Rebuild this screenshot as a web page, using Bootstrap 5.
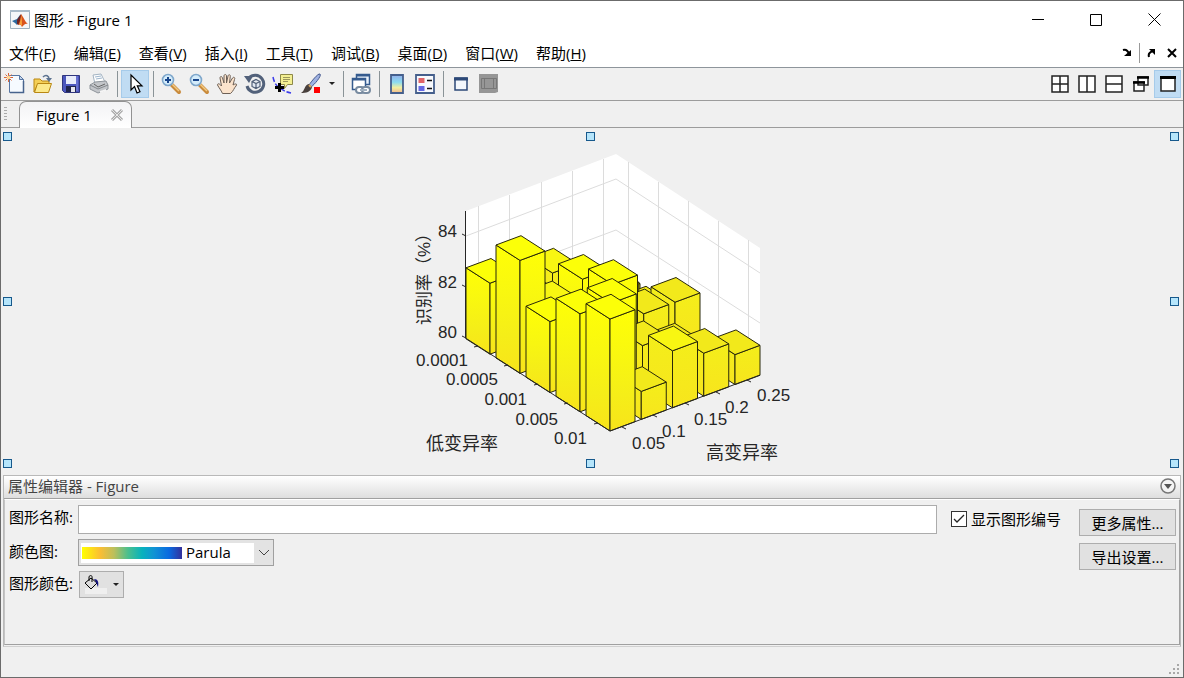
<!DOCTYPE html>
<html lang="zh-CN">
<head>
<meta charset="utf-8">
<meta name="viewport" content="width=device-width, initial-scale=1">
<title>图形 - Figure 1</title>
<link href="https://cdn.jsdelivr.net/npm/bootstrap@5.3.0/dist/css/bootstrap.min.css" rel="stylesheet">
<style>
  :root { --face: #f0f0f0; --line: #a0a0a0; }
  body { font-family: "Open Sans", "Noto Sans CJK SC", sans-serif; font-size: 15px; line-height: 20px; color: #000; background: var(--face); }
  .app-window { border: 1px solid #6b6b6b; background: var(--face); }
  .title-bar { height: 37px; background: #fff; padding-left: 9px; }
  .win-btn { width: 58px; height: 36px; }
  .plain-btn { border: 0; background: transparent; padding: 0; display: inline-flex; align-items: center; justify-content: center; color: #000; flex: none; }
  .menu-bar { height: 30px; background: #fff; border-bottom: 1px solid #8e959b; padding: 0 1px 0 8px; }
  .menu-bar a { color: #000; text-decoration: none; white-space: nowrap; margin-right: 18px; }
  .dock-btn { width: 20px; height: 20px; }
  .dock-sep { width: 1px; height: 20px; background: #999; margin: 0 2px; }
  .tool-bar { height: 33px; border-bottom: 1px solid #9c9c9c; padding-right: 2px; }
  .tool-btn { width: 28px; height: 28px; }
  .tool-btn svg { width: 22px; height: 22px; }
  .tool-arrow { width: 14px; height: 28px; }
  .layout-btn { width: 27px; height: 28px; }
  .picked { background: #c0dcf3; border: 1px solid #a6cbea; }
  .tool-sep { width: 8px; height: 26px; flex: none; background: linear-gradient(#8a9397, #8a9397) center / 1px 100% no-repeat; }
  .tab-strip { height: 27px; border-bottom: 1px solid #9c9c9c; }
  .grip { width: 3px; height: 15px; margin: 6px 12px 0 3px; background: repeating-linear-gradient(#aaa 0 1px, transparent 1px 3px); }
  .fig-tab { height: 27px; width: 113px; padding: 0 7px 0 16px; border: 1px solid #929292; border-bottom: 0; border-radius: 7px 7px 0 0; background: linear-gradient(#f3f3f5, #fff); }
  .fig-canvas { min-height: 300px; }
  .fig-canvas .plot { width: 400px; height: 100%; }
  .handle { position: absolute; width: 9px; height: 9px; background: #b5e5fb; border: 1px solid #17598c; }
  .h-top { top: 4px; } .h-mid { top: calc(50% - 5px); } .h-bot { bottom: 7px; }
  .h-left { left: 2px; } .h-cen { left: calc(50% - 6px); } .h-right { right: 4px; }
  .prop-panel { margin: 0 2px; border: 1px solid #b9b9b9; border-bottom-color: #d0d0d0; padding-bottom: 1px; }
  .prop-head { height: 23px; border-bottom: 1px solid var(--line); background: linear-gradient(#fff, #dedede); color: #444; padding: 0 4px 2px 4px; }
  .prop-body { height: 146px; border: 1px solid var(--line); border-top-color: #fff; border-left-color: #c4c4c4; padding: 5px 3px 0 4px; }
  .prop-grid { display: grid; grid-template-columns: auto 1fr; column-gap: 5px; row-gap: 5px; align-items: start; }
  .prop-grid label { white-space: nowrap; line-height: 24px; }
  .name-box { height: 29px; border: 1px solid #acacac; border-radius: 0; width: 100%; padding: 0 4px; background: #fff; }
  .map-select { width: 196px; height: 27px; border: 1px solid var(--line); color: #000; appearance: none; border-radius: 0; padding: 0 24px 0 107px; line-height: 25px;
    background:
      url("data:image/svg+xml,%3Csvg xmlns='http://www.w3.org/2000/svg' width='12' height='8'%3E%3Cpath d='M1 1l5 5 5-5' fill='none' stroke='%23444'/%3E%3C/svg%3E") right 3px center no-repeat,
      linear-gradient(90deg, #ff0 0, #fbbe33 18%, #bcbf5c 32%, #4bbf8e 46%, #07b2bd 60%, #1193d4 72%, #0a6ae0 87%, #33309c 100%) 3px center / 100px 12px no-repeat,
      linear-gradient(#fff, #fff) 2px center / 173px 20px no-repeat, #e3e3e3; }
  .push-btn { height: 27px; border: 1px solid #adadad; background: #e1e1e1; color: #000; white-space: nowrap; padding: 0; }
  .paint-btn { width: 45px; margin-left: 1px; }
  .side-btn { width: 97px; }
  .tick-box { appearance: none; width: 16px; height: 16px; margin: 0; border: 1px solid #333; background: #fff; }
  .tick-box:checked { background: #fff url("data:image/svg+xml,%3Csvg xmlns='http://www.w3.org/2000/svg' width='14' height='14'%3E%3Cpath d='M2 7l3 3 7-7' fill='none' stroke='%23222' stroke-width='1.3'/%3E%3C/svg%3E") center no-repeat; }
  .tick-wrap { margin: 4px 18px 0 14px; gap: 4px; white-space: nowrap; height: 20px; }
  .status-bar { height: 30px; padding: 0 2px 1px 0; }
  .plot text { font: 17px "Liberation Sans", "Noto Sans CJK SC", sans-serif; fill: #262626; }
  .plot .axis-name { font-size: 18px; }
  .gridline { stroke: #dcdcdc; fill: none; }
  .axisline { stroke: #262626; fill: none; }
  #bars polygon { stroke: #29280a; stroke-width: 1; stroke-linejoin: round; }
</style>
</head>
<body>
<div class="app-window vh-100 d-flex flex-column overflow-hidden">

  <header class="title-bar d-flex align-items-center">
    <svg width="20" height="20" viewBox="0 0 20 20"><path fill="#f4f6f8" stroke="#9db0bf" d="M.5.5h19v18H.5z"/><path fill="#a9bac8" d="M0 0h20v2H0z"/><path fill="#2d6a9f" d="M2 11l5-2 3-4 1 5-4 5-2-2z"/><path fill="#6f2422" d="M7 10l4-6 1 5-3 6-2-1z"/><path fill="#d9531e" d="M11 4c2 2 4 8 7 10-3-1-4 1-6 3-1-2-2-3-4-2 2-3 3-8 3-11z"/><path fill="#f6a03a" d="M11 5c1 3 1 7 1 11-1-1-2-2-3-1 1-3 2-6 2-10z"/></svg>
    <span class="ms-1">图形 - Figure 1</span>
    <div class="ms-auto d-flex">
      <button class="plain-btn win-btn" aria-label="最小化"><svg width="12" height="12"><path stroke="#000" d="M0 5.500h12"/></svg></button>
      <button class="plain-btn win-btn" aria-label="最大化"><svg width="12" height="12"><path stroke="#000" fill="none" d="M.5.5h11v11H.5z"/></svg></button>
      <button class="plain-btn win-btn" aria-label="关闭"><svg width="13" height="13"><path stroke="#000" d="M.5.5l12 12m0-12l-12 12"/></svg></button>
    </div>
  </header>

  <nav class="menu-bar d-flex align-items-center">
    <a href="#">文件(<u>F</u>)</a><a href="#">编辑(<u>E</u>)</a><a href="#">查看(<u>V</u>)</a><a href="#">插入(<u>I</u>)</a><a href="#">工具(<u>T</u>)</a><a href="#">调试(<u>B</u>)</a><a href="#">桌面(<u>D</u>)</a><a href="#">窗口(<u>W</u>)</a><a href="#">帮助(<u>H</u>)</a>
    <div class="ms-auto d-flex align-items-center">
      <button class="plain-btn dock-btn" aria-label="停靠"><svg width="10" height="10"><path d="M1 2c3-1 5 1 6 4" fill="none" stroke="#000" stroke-width="2"/><path d="M9 2v6H2z"/></svg></button>
      <span class="dock-sep"></span>
      <button class="plain-btn dock-btn" aria-label="取消停靠"><svg width="10" height="10"><path d="M2 9c-1-3 1-5 4-6" fill="none" stroke="#000" stroke-width="2"/><path d="M2 1h6v6z"/></svg></button>
      <button class="plain-btn dock-btn" aria-label="关闭图形"><svg width="10" height="10"><path d="M1 1l8 8m0-8L1 9" stroke="#000" stroke-width="2"/></svg></button>
    </div>
  </nav>

  <div class="tool-bar d-flex align-items-center">
    <button class="plain-btn tool-btn" aria-label="新建"><svg viewBox="0 0 22 22"><path d="M5.500 2.500h10l4 4v13h-14z" fill="#f6faff" stroke="#5876a3"/><path d="M15.500 2.500v4h4z" fill="#c6d7ec" stroke="#5876a3"/><path d="M6 19.500h13.500V8" fill="none" stroke="#47638d" stroke-width="1.500"/><path d="M4.500 0v9M0 4.500h9M1.500 1.500l6 6m0-6l-6 6" stroke="#d9663a"/><circle cx="4.500" cy="4.500" r="1.800" fill="#ffd894"/></svg></button>
    <button class="plain-btn tool-btn" aria-label="打开"><svg viewBox="0 0 22 22"><path d="M2 6h6l2 2h7v3H6l-4 8z" fill="#f4cf57" stroke="#b98713"/><path d="M2.500 19.500l3-9h14l-3 9z" fill="#fce98b" stroke="#b98713"/><path d="M11 4c3-3 6-1 6 2" stroke="#5d7390" stroke-width="1.500" fill="none"/><path d="M14 5h6l-3 4z" fill="#5d7390"/></svg></button>
    <button class="plain-btn tool-btn" aria-label="保存"><svg viewBox="0 0 22 22"><path d="M2.500 2.500h17v17h-15l-2-2z" fill="#4b56bd" stroke="#30367e"/><path d="M6 3h10v8H6z" fill="#e8ecfb"/><path d="M17 3v15" stroke="#838be4"/><path d="M6 13h10v6H6z" fill="#20254e"/><path d="M11 14h4v5h-4z" fill="#e6e6ef"/></svg></button>
    <button class="plain-btn tool-btn" aria-label="打印"><svg viewBox="0 0 22 22"><path d="M5 2l8-1 4 8-10 2z" fill="#fff" stroke="#a3b3c2"/><path d="M7 4l6-1M8 6l6-1" stroke="#9db5cc"/><path d="M2 12l5-3 11-1 2 4v4l-10 4-8-4z" fill="#c3c6ca" stroke="#8f959b"/><path d="M2 12l8 4 10-4" fill="none" stroke="#85898e"/><path d="M6 11l4 3 7-3" fill="none" stroke="#666"/><path d="M12 18l6-2v2l-6 2z" fill="#f5f5f5"/></svg></button>
    <span class="tool-sep"></span>
    <button class="plain-btn tool-btn picked" aria-label="编辑绘图"><svg viewBox="0 0 22 22"><path d="M7 2v15l3.500-3.500L13 20l3-1.200-2.700-6H18z" fill="#fff" stroke="#000" stroke-width="1.200"/></svg></button>
    <span class="tool-sep"></span>
    <button class="plain-btn tool-btn" aria-label="放大"><svg viewBox="0 0 22 22"><path d="M12 12l7 7" stroke="#c98b3d" stroke-width="4" stroke-linecap="round"/><path d="M12 11l7 7" stroke="#f3ca82" stroke-width="1.500"/><circle cx="8" cy="7" r="5.500" fill="#d4ecfb" stroke="#7fa7cb" stroke-width="1.600"/><path d="M8 4v6M5 7h6" stroke="#18458b" stroke-width="2"/></svg></button>
    <button class="plain-btn tool-btn" aria-label="缩小"><svg viewBox="0 0 22 22"><path d="M12 12l7 7" stroke="#c98b3d" stroke-width="4" stroke-linecap="round"/><path d="M12 11l7 7" stroke="#f3ca82" stroke-width="1.500"/><circle cx="8" cy="7" r="5.500" fill="#d4ecfb" stroke="#7fa7cb" stroke-width="1.600"/><path d="M5 7h6" stroke="#18458b" stroke-width="2"/></svg></button>
    <button class="plain-btn tool-btn" aria-label="平移"><svg viewBox="0 0 22 22"><path d="M6.500 20.500C5 17 3 15 1.500 12c0-2 2-1.500 4 1L4 5c0-2 2-2 2.500 0L8 10V3c0-2 2.500-2 2.500 0v7l1.500-7c.5-2 2.500-1.500 2.300.3L13.500 10l3-5c1-1.500 3-.5 2 1.500L17 12c3-2 4.500-1 3 1-2 2-2.500 5-5.500 7.500z" fill="#fbe3cc" stroke="#6d6056"/></svg></button>
    <button class="plain-btn tool-btn" aria-label="三维旋转"><svg viewBox="0 0 22 22"><path d="M5 5a8.500 8.500 0 1 1-2 8" fill="none" stroke="#52617a" stroke-width="3"/><path d="M0 3l9 0-4 7z" fill="#52617a"/><path d="M8 8.500l4-2 4 2v5l-4 2-4-2zM8 8.500l4 2 4-2M12 10.500v5" fill="#e0e7f1" stroke="#52617a" stroke-width="1.200"/></svg></button>
    <button class="plain-btn tool-btn" aria-label="数据游标"><svg viewBox="0 0 22 22"><path d="M8.500 1.500h12v10h-5l-3 4v-4h-4z" fill="#f3ef92" stroke="#8d8848"/><path d="M11 4.500h7M11 6.500h7M11 8.500h5" stroke="#9b975c"/><path d="M1 4c1 5 3 9 7 11 4 3 6 4 11 5" fill="none" stroke="#3b3bea" stroke-width="1.500" stroke-dasharray="5 2"/><path d="M7.500 10v9M3 14.500h9" stroke="#000" stroke-width="3"/></svg></button>
    <button class="plain-btn tool-btn" aria-label="刷亮数据"><svg viewBox="0 0 22 22"><path d="M20 1c2 2-6 11-9 13l-2-2C11 9 18 0 20 1z" fill="#9fb2e2" stroke="#44588e"/><path d="M9 11l3 3c-1 5-6 6-11 6 4-2 3-8 8-9z" fill="#49403d"/><path d="M9 12l2 2" stroke="#d9a861" stroke-width="2"/><path d="M14 14h6v6h-6z" fill="#f00"/></svg></button>
    <button class="plain-btn tool-arrow" aria-label="刷亮颜色"><svg width="6" height="4"><path d="M0 0h6L3 3z" fill="#222"/></svg></button>
    <span class="tool-sep"></span>
    <button class="plain-btn tool-btn" aria-label="链接绘图"><svg viewBox="0 0 22 22"><path d="M6.500 1.500h13v10h-13z" fill="#eaf2fb" stroke="#355b8e" stroke-width="1.500"/><path d="M6 2.500h14" stroke="#355b8e" stroke-width="2"/><path d="M2.500 5.500h13v11h-13z" fill="#fff" stroke="#355b8e" stroke-width="1.500"/><path d="M2 6.500h14" stroke="#355b8e" stroke-width="2"/><rect x="6" y="14" width="8" height="6" rx="3" fill="#fff" stroke="#788ba0" stroke-width="2"/><rect x="12" y="14" width="8" height="6" rx="3" fill="#fff" stroke="#788ba0" stroke-width="2"/><path d="M10 17h7" stroke="#a2b1c0" stroke-width="2"/></svg></button>
    <span class="tool-sep"></span>
    <button class="plain-btn tool-btn" aria-label="插入颜色栏"><svg viewBox="0 0 22 22"><defs><linearGradient id="cbar" x2="0" y2="1"><stop stop-color="#93aeea"/><stop offset=".4" stop-color="#8adcf1"/><stop offset=".7" stop-color="#f2f0a0"/><stop offset="1" stop-color="#f2b78c"/></linearGradient></defs><path d="M5 2h12v18H5z" fill="url(#cbar)" stroke="#455f8c" stroke-width="1.800"/></svg></button>
    <button class="plain-btn tool-btn" aria-label="插入图例"><svg viewBox="0 0 22 22"><path d="M2 2h18v18H2z" fill="#f7f9fd" stroke="#455f8c" stroke-width="1.800"/><path d="M4.500 5h6v5h-6z" fill="#e06468"/><path d="M4.500 13h6v5h-6z" fill="#6568e4"/><path d="M13 7.500h5M13 15.500h5" stroke="#111" stroke-width="1.500"/></svg></button>
    <span class="tool-sep"></span>
    <button class="plain-btn tool-btn" aria-label="隐藏绘图工具"><svg viewBox="0 0 22 22"><path d="M5 5h12v12H5z" fill="#f3f7fc" stroke="#2c4877" stroke-width="1.500"/><path d="M4 6h14" stroke="#2c4877" stroke-width="3"/></svg></button>
    <button class="plain-btn tool-btn" aria-label="显示绘图工具"><svg viewBox="0 0 22 22"><path d="M1 1h19v18l-3 1H1z" fill="#969696"/><path d="M3.500 5.500h15v10h-15zM6.500 5.500v10M15.500 5.500v10" fill="none" stroke="#777"/></svg></button>
    <div class="ms-auto d-flex">
      <button class="plain-btn layout-btn" aria-label="平铺"><svg width="18" height="18"><path d="M1 1h16v16H1zM9 1v16M1 9h16" fill="#fff" stroke="#222" stroke-width="1.500"/></svg></button>
      <button class="plain-btn layout-btn" aria-label="左右平铺"><svg width="18" height="18"><path d="M1 1h16v16H1zM9 1v16" fill="#fff" stroke="#222" stroke-width="1.500"/></svg></button>
      <button class="plain-btn layout-btn" aria-label="上下平铺"><svg width="18" height="18"><path d="M1 1h16v16H1zM1 9h16" fill="#fff" stroke="#222" stroke-width="1.500"/></svg></button>
      <button class="plain-btn layout-btn" aria-label="浮动"><svg width="16" height="16"><path d="M5 1h10v8H5zM1 6h10v9H1z" fill="#fff" stroke="#222" stroke-width="1.500"/><path d="M4 1.500h12M0 6.500h12" stroke="#000" stroke-width="2.500"/></svg></button>
      <button class="plain-btn layout-btn picked" aria-label="最大化图形"><svg width="16" height="16"><path d="M1 1h14v14H1z" fill="#fff" stroke="#222" stroke-width="1.500"/><path d="M0 1.500h16" stroke="#000" stroke-width="3"/></svg></button>
    </div>
  </div>

  <div class="tab-strip d-flex">
    <span class="grip"></span>
    <div class="fig-tab d-flex align-items-center justify-content-between">
      <span>Figure 1</span>
      <button class="plain-btn" aria-label="关闭标签"><svg width="14" height="12"><path d="M2 1l10 10m0-10L2 11" stroke="#a9a9a9" stroke-width="3"/><path d="M2 1l10 10m0-10L2 11" stroke="#e6e6e6"/></svg></button>
    </div>
  </div>

  <main class="fig-canvas flex-grow-1 position-relative d-flex justify-content-center">
    <svg class="plot" viewBox="392 128 400 347" role="img" aria-label="识别率三维柱状图">
      <defs>
        <linearGradient id="faceTall" x2="0" y2="1"><stop stop-color="#ffff06"/><stop offset=".35" stop-color="#f9f80f"/><stop offset=".7" stop-color="#f5ee18"/><stop offset="1" stop-color="#f8e41a"/></linearGradient>
        <linearGradient id="faceLow" x2="0" y2="1"><stop stop-color="#f4ee1a"/><stop offset="1" stop-color="#f7e51d"/></linearGradient>
      </defs>
      <path d="M466 211L616 154 760 248V375L610 431 466 338z" fill="#fff"/>
      <path class="gridline" d="M478.500 206V346M509.500 195V346M541.500 182V346M572.500 171V346M603.500 159V346M628.500 162V346M658.500 182V346M688.500 201V346M718.500 221V346M748.500 240V346M466 236L616 179 760 273M466 286L616 230 760 323"/>
      <g id="bars"></g>
      <path class="axisline" d="M465.500 211V338L610 431 760 375M466 236l-4-2M466 287l-4-2M466 338l-4-2M478 346l-4 1M508 365l-4 1M538 384l-4 1M568 403l-4 1M598 423l-4 1M622 427l4 2M653 415l4 2M685 403l4 2M716 392l4 2M747 380l4 2"/>
      <g text-anchor="end">
        <text x="457" y="237">84</text><text x="457" y="288">82</text><text x="457" y="338">80</text>
        <text x="468" y="366">0.0001</text><text x="498" y="385">0.0005</text><text x="527" y="405">0.001</text><text x="558" y="425">0.005</text><text x="587" y="444">0.01</text>
      </g>
      <text x="632" y="449">0.05</text><text x="662" y="437">0.1</text><text x="694" y="425">0.15</text><text x="725" y="413">0.2</text><text x="757" y="401">0.25</text>
      <text class="axis-name" x="426" y="450">低变异率</text>
      <text class="axis-name" x="706" y="459">高变异率</text>
      <text transform="translate(430 325) rotate(-90)">识别率（%）</text>
    </svg>
    <span class="handle h-top h-left"></span><span class="handle h-top h-cen"></span><span class="handle h-top h-right"></span>
    <span class="handle h-mid h-left"></span><span class="handle h-mid h-right"></span>
    <span class="handle h-bot h-left"></span><span class="handle h-bot h-cen"></span><span class="handle h-bot h-right"></span>
  </main>

  <section class="prop-panel">
    <div class="prop-head d-flex align-items-center justify-content-between">
      <span>属性编辑器 - Figure</span>
      <button class="plain-btn" aria-label="折叠"><svg width="16" height="16"><circle cx="8" cy="8" r="7" fill="#f4f4f4" stroke="#777" stroke-width="1.500"/><path d="M4 6h8l-4 5z" fill="#555"/></svg></button>
    </div>
    <form class="prop-body d-flex align-items-start">
      <div class="prop-grid flex-grow-1">
        <label for="figName">图形名称:</label>
        <input id="figName" class="name-box" type="text">
        <label for="figMap">颜色图:</label>
        <select id="figMap" class="map-select"><option>Parula</option><option>Jet</option><option>HSV</option></select>
        <label for="figColor">图形颜色:</label>
        <button id="figColor" type="button" class="push-btn paint-btn d-flex align-items-center justify-content-between px-1" aria-label="图形颜色">
          <svg width="24" height="20"><path d="M1 13h22v6H1z" fill="#efefef"/><path d="M1 8l6-5 6 5-6 6z" fill="#dcdcdc" stroke="#000"/><path d="M5 6V2c0-2 4-2 3 1v4" fill="none" stroke="#000"/><path d="M10 4c4 0 5 3 4 8-1-2-1-4-4-8z" fill="#11117d"/></svg>
          <svg width="6" height="4"><path d="M0 0h6L3 3z" fill="#222"/></svg>
        </button>
      </div>
      <div class="tick-wrap d-flex align-items-center">
        <input id="showNum" class="tick-box" type="checkbox" checked><label for="showNum">显示图形编号</label>
      </div>
      <div class="d-flex flex-column pt-1" style="gap:7px">
        <button type="button" class="push-btn side-btn">更多属性...</button>
        <button type="button" class="push-btn side-btn">导出设置...</button>
      </div>
    </form>
  </section>

  <footer class="status-bar d-flex justify-content-end align-items-end">
    <svg width="12" height="12" fill="#a8a8a8"><path d="M8 0h2v2H8zM4 4h2v2H4zM8 4h2v2H8zM0 8h2v2H0zM4 8h2v2H4zM8 8h2v2H8z"/></svg>
  </footer>
</div>
<script src="https://cdn.jsdelivr.net/npm/bootstrap@5.3.0/dist/js/bootstrap.bundle.min.js"></script>
<script>
  // Bar heights: one row per low rate (back to front), one column per high rate.
  const heights = [
    [71, 50, 58, 30, 15],
    [113, 56, 71, 47, 16],
    [71, 60, 85, 44, 44],
    [98, 97, 43, 29, 8],
    [112, 28, 57, 43, 30]
  ];
  const group = document.getElementById('bars');
  function face(points, fill) {
    const p = document.createElementNS('http://www.w3.org/2000/svg', 'polygon');
    p.setAttribute('points', points.map(q => q.join(',')).join(' '));
    p.setAttribute('fill', fill);
    group.appendChild(p);
  }
  heights.forEach((row, i) => {
    for (let j = 4; j >= 0; j--) {
      const h = row[j];
      const x = 610 - 30 * (4 - i) + 31.25 * j;
      const y = 431 - 19.2 * (4 - i) - 11.6 * j;
      const side = h > 62 ? 'url(#faceTall)' : 'url(#faceLow)';
      const left = [x - 24, y - 15.4], right = [x + 25, y - 9.3], back = [x + 1, y - 24.7];
      const up = p => [p[0], p[1] - h];
      face([left, [x, y], up([x, y]), up(left)], side);
      face([[x, y], right, up(right), up([x, y])], side);
      face([up(left), up([x, y]), up(right), up(back)], h > 62 ? '#fcff08' : h > 50 ? '#f8f612' : '#f2e91b');
    }
  });
</script>
</body>
</html>
